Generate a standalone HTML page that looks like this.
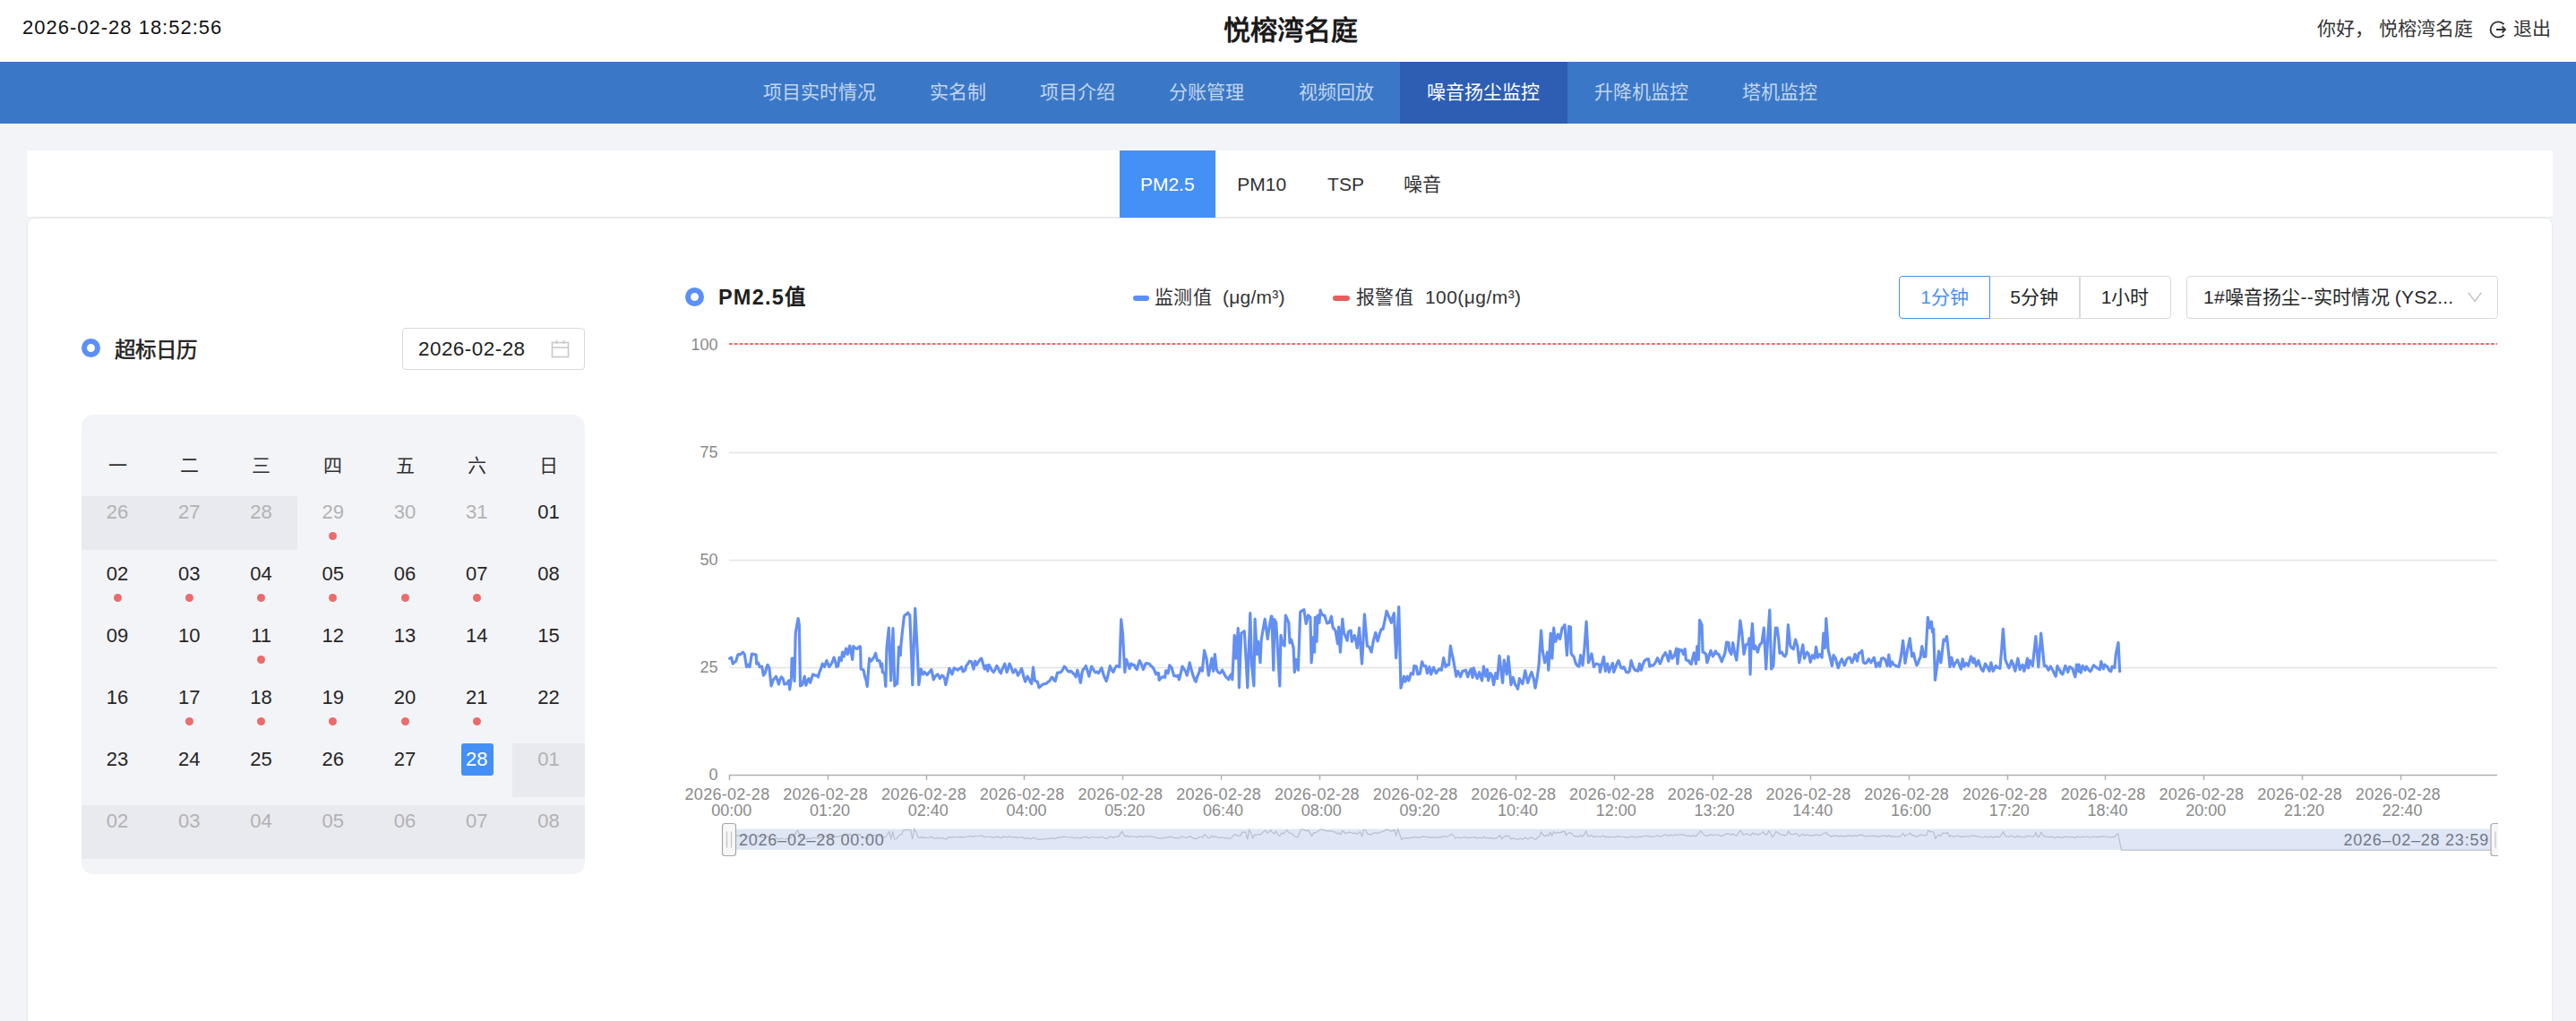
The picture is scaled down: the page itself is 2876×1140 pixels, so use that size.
<!DOCTYPE html>
<html lang="zh-CN"><head><meta charset="utf-8">
<style>
*{margin:0;padding:0;box-sizing:border-box}
html,body{width:2876px;height:1140px;overflow:hidden}
body{position:relative;background:#f3f4f8;font-family:"Liberation Sans",sans-serif;color:#303133}
.a{position:absolute;white-space:nowrap}
#hdr{left:0;top:0;width:2876px;height:69px;background:#fff}
#nav{left:0;top:69px;width:2876px;height:69px;background:#3a78c7}
.ni{position:absolute;top:0;height:69px;line-height:67px;font-size:21px;color:rgba(255,255,255,.7);text-align:center}
.ni.on{background:#2d5eb3;color:#fff}
#c1{left:30px;top:168px;width:2820px;height:75px;background:#fff;border-bottom:1px solid #e9eaed}
.tab{position:absolute;top:168px;height:75px;line-height:75px;font-size:21px;color:#303133;text-align:center}
.tab.on{background:#4490f6;color:#fff}
#c2{left:30px;top:243px;width:2820px;height:940px;background:#fff;border:1px solid #e8e9ec;border-radius:8px}
.ring{position:absolute;width:21px;height:21px;border-radius:50%;border:6px solid #5b8ff9;background:#fff}
.ttl{font-size:23.5px;font-weight:bold;color:#1f1f1f}
#dinp{left:449px;top:366px;width:204px;height:47px;border:1px solid #d9d9d9;border-radius:4px;background:#fff}
#cal{left:91px;top:463px;width:562px;height:513px;background:#f3f4f8;border-radius:13px;overflow:hidden}
.wd{position:absolute;top:503px;width:80px;text-align:center;font-size:21px;color:#303133}
.cell{position:absolute;width:80.23px;height:60px}
.cell.g{background:#e9eaef}
.num{position:absolute;left:0;right:0;top:0.5px;height:36px;line-height:36px;text-align:center;font-size:22px;color:#262626}
.cell.o .num{color:#b2b2b2}
.dot{position:absolute;left:50%;top:40.5px;width:9px;height:9px;margin-left:-4.5px;border-radius:50%;background:#ec6b6b}
.sel{position:absolute;left:22.5px;top:0;width:36px;height:36px;border-radius:3px;background:#4490f6}
.sel+.num{color:#fff}
.btn{position:absolute;top:308px;height:48px;line-height:46px;text-align:center;font-size:21px;color:#262626;border:1px solid #d9d9d9;background:#fff}
.lab{font-size:18px;color:#8a8a8a}
</style></head><body>
<div id="hdr" class="a"></div>
<div class="a" style="left:25px;top:17px;font-size:22px;line-height:28px;letter-spacing:1px;color:#111">2026-02-28 18:52:56</div>
<div class="a" style="left:1366px;top:17px;font-size:30px;line-height:34px;font-weight:bold;color:#1a1a1a">悦榕湾名庭</div>
<div class="a" style="left:2587px;top:20px;font-size:21px;line-height:24px;color:#333">你好，&nbsp;悦榕湾名庭</div>
<svg class="a" style="left:2778px;top:22px" width="22" height="22" viewBox="0 0 22 22"><path d="M17.5 5.2A8.6 8.6 0 1 0 17.5 16.8" fill="none" stroke="#333" stroke-width="1.8"/><path d="M9 11H19M15.5 7.5L19 11L15.5 14.5" fill="none" stroke="#333" stroke-width="1.8"/></svg>
<div class="a" style="left:2806px;top:20px;font-size:21px;line-height:24px;color:#333">退出</div>

<div id="nav" class="a">
<div class="ni" style="left:822.5px;width:185px">项目实时情况</div>
<div class="ni" style="left:1007.7px;width:123.3px">实名制</div>
<div class="ni" style="left:1131px;width:144px">项目介绍</div>
<div class="ni" style="left:1275px;width:144.5px">分账管理</div>
<div class="ni" style="left:1419.5px;width:144px">视频回放</div>
<div class="ni on" style="left:1563px;width:186.5px">噪音扬尘监控</div>
<div class="ni" style="left:1749.5px;width:165px">升降机监控</div>
<div class="ni" style="left:1914.5px;width:144px">塔机监控</div>
</div>

<div id="c1" class="a"></div>
<div class="tab on" style="left:1249.5px;width:107.5px">PM2.5</div>
<div class="tab" style="left:1357px;width:103.5px">PM10</div>
<div class="tab" style="left:1460.5px;width:84px">TSP</div>
<div class="tab" style="left:1544.5px;width:86.5px">噪音</div>

<div id="c2" class="a"></div>

<!-- calendar -->
<div class="ring" style="left:91px;top:378px"></div>
<div class="a ttl" style="left:128px;top:377px;line-height:28px;font-weight:normal;-webkit-text-stroke:.55px #222;color:#222">超标日历</div>
<div id="dinp" class="a"></div>
<div class="a" style="left:467px;top:376px;font-size:22.4px;line-height:28px;letter-spacing:.5px;color:#222">2026-02-28</div>
<svg class="a" style="left:615px;top:379px" width="21" height="21" viewBox="0 0 21 21"><rect x="1.5" y="3.5" width="18" height="16" fill="none" stroke="#c8c8c8" stroke-width="1.6"/><path d="M1.5 9H19.5M6.5 1V5M14.5 1V5" stroke="#c8c8c8" stroke-width="1.6"/></svg>
<div id="cal" class="a"></div>
<div id="calg">
<div class="wd" style="left:91.00px;width:80.23px">一</div>
<div class="wd" style="left:171.23px;width:80.23px">二</div>
<div class="wd" style="left:251.46px;width:80.23px">三</div>
<div class="wd" style="left:331.69px;width:80.23px">四</div>
<div class="wd" style="left:411.92px;width:80.23px">五</div>
<div class="wd" style="left:492.15px;width:80.23px">六</div>
<div class="wd" style="left:572.38px;width:80.23px">日</div>
<div class="cell o g" style="left:91.00px;top:553.8px"><div class="num">26</div></div>
<div class="cell o g" style="left:171.23px;top:553.8px"><div class="num">27</div></div>
<div class="cell o g" style="left:251.46px;top:553.8px"><div class="num">28</div></div>
<div class="cell o" style="left:331.69px;top:553.8px"><div class="num">29</div><div class="dot"></div></div>
<div class="cell o" style="left:411.92px;top:553.8px"><div class="num">30</div></div>
<div class="cell o" style="left:492.15px;top:553.8px"><div class="num">31</div></div>
<div class="cell" style="left:572.38px;top:553.8px"><div class="num">01</div></div>
<div class="cell" style="left:91.00px;top:622.8px"><div class="num">02</div><div class="dot"></div></div>
<div class="cell" style="left:171.23px;top:622.8px"><div class="num">03</div><div class="dot"></div></div>
<div class="cell" style="left:251.46px;top:622.8px"><div class="num">04</div><div class="dot"></div></div>
<div class="cell" style="left:331.69px;top:622.8px"><div class="num">05</div><div class="dot"></div></div>
<div class="cell" style="left:411.92px;top:622.8px"><div class="num">06</div><div class="dot"></div></div>
<div class="cell" style="left:492.15px;top:622.8px"><div class="num">07</div><div class="dot"></div></div>
<div class="cell" style="left:572.38px;top:622.8px"><div class="num">08</div></div>
<div class="cell" style="left:91.00px;top:691.8px"><div class="num">09</div></div>
<div class="cell" style="left:171.23px;top:691.8px"><div class="num">10</div></div>
<div class="cell" style="left:251.46px;top:691.8px"><div class="num">11</div><div class="dot"></div></div>
<div class="cell" style="left:331.69px;top:691.8px"><div class="num">12</div></div>
<div class="cell" style="left:411.92px;top:691.8px"><div class="num">13</div></div>
<div class="cell" style="left:492.15px;top:691.8px"><div class="num">14</div></div>
<div class="cell" style="left:572.38px;top:691.8px"><div class="num">15</div></div>
<div class="cell" style="left:91.00px;top:760.8px"><div class="num">16</div></div>
<div class="cell" style="left:171.23px;top:760.8px"><div class="num">17</div><div class="dot"></div></div>
<div class="cell" style="left:251.46px;top:760.8px"><div class="num">18</div><div class="dot"></div></div>
<div class="cell" style="left:331.69px;top:760.8px"><div class="num">19</div><div class="dot"></div></div>
<div class="cell" style="left:411.92px;top:760.8px"><div class="num">20</div><div class="dot"></div></div>
<div class="cell" style="left:492.15px;top:760.8px"><div class="num">21</div><div class="dot"></div></div>
<div class="cell" style="left:572.38px;top:760.8px"><div class="num">22</div></div>
<div class="cell" style="left:91.00px;top:829.8px"><div class="num">23</div></div>
<div class="cell" style="left:171.23px;top:829.8px"><div class="num">24</div></div>
<div class="cell" style="left:251.46px;top:829.8px"><div class="num">25</div></div>
<div class="cell" style="left:331.69px;top:829.8px"><div class="num">26</div></div>
<div class="cell" style="left:411.92px;top:829.8px"><div class="num">27</div></div>
<div class="cell" style="left:492.15px;top:829.8px"><div class="sel"></div><div class="num">28</div></div>
<div class="cell o g" style="left:572.38px;top:829.8px"><div class="num">01</div></div>
<div class="cell o g" style="left:91.00px;top:898.8px"><div class="num">02</div></div>
<div class="cell o g" style="left:171.23px;top:898.8px"><div class="num">03</div></div>
<div class="cell o g" style="left:251.46px;top:898.8px"><div class="num">04</div></div>
<div class="cell o g" style="left:331.69px;top:898.8px"><div class="num">05</div></div>
<div class="cell o g" style="left:411.92px;top:898.8px"><div class="num">06</div></div>
<div class="cell o g" style="left:492.15px;top:898.8px"><div class="num">07</div></div>
<div class="cell o g" style="left:572.38px;top:898.8px"><div class="num">08</div></div>
</div><!--/calg-->

<!-- chart header -->
<div class="ring" style="left:765px;top:321px"></div>
<div class="a ttl" style="left:802px;top:318px;line-height:28px;letter-spacing:1.2px">PM2.5值</div>
<div class="a" style="left:1265px;top:330px;width:18px;height:6px;border-radius:3px;background:#5b8ff9"></div>
<div class="a" style="left:1289px;top:318px;font-size:21px;line-height:28px;letter-spacing:.25px;color:#333">监测值&nbsp;&nbsp;(μg/m³)</div>
<div class="a" style="left:1488px;top:330px;width:19px;height:6px;border-radius:3px;background:#e85d5d"></div>
<div class="a" style="left:1514px;top:318px;font-size:21px;line-height:28px;letter-spacing:.45px;color:#333">报警值&nbsp;&nbsp;100(μg/m³)</div>

<div class="btn" style="left:2120px;width:102px;border-color:#4a8ff4;color:#4a8ff4;z-index:2;border-radius:4px 0 0 4px">1分钟</div>
<div class="btn" style="left:2221px;width:101px;border-left:none">5分钟</div>
<div class="btn" style="left:2321.5px;width:102px;border-radius:0 4px 4px 0">1小时</div>
<div class="btn" style="left:2441px;width:348px;text-align:left;padding-left:18px;letter-spacing:.2px;border-radius:4px">1#噪音扬尘--实时情况 (YS2...</div>
<svg class="a" style="left:2754px;top:325px" width="18" height="14" viewBox="0 0 18 14"><path d="M1.7 1.7L9.1 11.5L16.2 1.9" fill="none" stroke="#bdbdbd" stroke-width="1.3"/></svg>

<div id="chart">
<svg class="a" style="left:0;top:0" width="2876" height="1140" viewBox="0 0 2876 1140">
<line x1="814" y1="745.5" x2="2788" y2="745.5" stroke="#e3e3e3" stroke-width="1.5"/>
<line x1="814" y1="625.5" x2="2788" y2="625.5" stroke="#e3e3e3" stroke-width="1.5"/>
<line x1="814" y1="505.5" x2="2788" y2="505.5" stroke="#e3e3e3" stroke-width="1.5"/>
<line x1="814" y1="384" x2="2788" y2="384" stroke="#dedede" stroke-width="1.5"/>
<line x1="814" y1="384" x2="2788" y2="384" stroke="#ef6767" stroke-width="1.8" stroke-dasharray="3.5 2.32" stroke-linecap="butt"/>
<line x1="814" y1="865.5" x2="2788" y2="865.5" stroke="#b0b0b0" stroke-width="1.5"/>
<text x="801.5" y="871.3" text-anchor="end" font-size="18" fill="#8a8a8a">0</text>
<text x="801.5" y="751.1" text-anchor="end" font-size="18" fill="#8a8a8a">25</text>
<text x="801.5" y="631.0" text-anchor="end" font-size="18" fill="#8a8a8a">50</text>
<text x="801.5" y="510.9" text-anchor="end" font-size="18" fill="#8a8a8a">75</text>
<text x="801.5" y="390.7" text-anchor="end" font-size="18" fill="#8a8a8a">100</text>
<line x1="814.5" y1="865" x2="814.5" y2="871" stroke="#b0b0b0" stroke-width="1.5"/>
<text x="812.0" y="893.2" text-anchor="middle" font-size="18" letter-spacing="0.28" fill="#8a8a8a">2026-02-28</text>
<text x="816.8" y="910.5" text-anchor="middle" font-size="18" fill="#8a8a8a">00:00</text>
<line x1="924.5" y1="865" x2="924.5" y2="871" stroke="#b0b0b0" stroke-width="1.5"/>
<text x="921.7" y="893.2" text-anchor="middle" font-size="18" letter-spacing="0.28" fill="#8a8a8a">2026-02-28</text>
<text x="926.5" y="910.5" text-anchor="middle" font-size="18" fill="#8a8a8a">01:20</text>
<line x1="1034.5" y1="865" x2="1034.5" y2="871" stroke="#b0b0b0" stroke-width="1.5"/>
<text x="1031.5" y="893.2" text-anchor="middle" font-size="18" letter-spacing="0.28" fill="#8a8a8a">2026-02-28</text>
<text x="1036.3" y="910.5" text-anchor="middle" font-size="18" fill="#8a8a8a">02:40</text>
<line x1="1143.5" y1="865" x2="1143.5" y2="871" stroke="#b0b0b0" stroke-width="1.5"/>
<text x="1141.2" y="893.2" text-anchor="middle" font-size="18" letter-spacing="0.28" fill="#8a8a8a">2026-02-28</text>
<text x="1146.0" y="910.5" text-anchor="middle" font-size="18" fill="#8a8a8a">04:00</text>
<line x1="1253.5" y1="865" x2="1253.5" y2="871" stroke="#b0b0b0" stroke-width="1.5"/>
<text x="1250.9" y="893.2" text-anchor="middle" font-size="18" letter-spacing="0.28" fill="#8a8a8a">2026-02-28</text>
<text x="1255.7" y="910.5" text-anchor="middle" font-size="18" fill="#8a8a8a">05:20</text>
<line x1="1363.5" y1="865" x2="1363.5" y2="871" stroke="#b0b0b0" stroke-width="1.5"/>
<text x="1360.6" y="893.2" text-anchor="middle" font-size="18" letter-spacing="0.28" fill="#8a8a8a">2026-02-28</text>
<text x="1365.4" y="910.5" text-anchor="middle" font-size="18" fill="#8a8a8a">06:40</text>
<line x1="1473.5" y1="865" x2="1473.5" y2="871" stroke="#b0b0b0" stroke-width="1.5"/>
<text x="1470.4" y="893.2" text-anchor="middle" font-size="18" letter-spacing="0.28" fill="#8a8a8a">2026-02-28</text>
<text x="1475.2" y="910.5" text-anchor="middle" font-size="18" fill="#8a8a8a">08:00</text>
<line x1="1582.5" y1="865" x2="1582.5" y2="871" stroke="#b0b0b0" stroke-width="1.5"/>
<text x="1580.1" y="893.2" text-anchor="middle" font-size="18" letter-spacing="0.28" fill="#8a8a8a">2026-02-28</text>
<text x="1584.9" y="910.5" text-anchor="middle" font-size="18" fill="#8a8a8a">09:20</text>
<line x1="1692.5" y1="865" x2="1692.5" y2="871" stroke="#b0b0b0" stroke-width="1.5"/>
<text x="1689.8" y="893.2" text-anchor="middle" font-size="18" letter-spacing="0.28" fill="#8a8a8a">2026-02-28</text>
<text x="1694.6" y="910.5" text-anchor="middle" font-size="18" fill="#8a8a8a">10:40</text>
<line x1="1802.5" y1="865" x2="1802.5" y2="871" stroke="#b0b0b0" stroke-width="1.5"/>
<text x="1799.5" y="893.2" text-anchor="middle" font-size="18" letter-spacing="0.28" fill="#8a8a8a">2026-02-28</text>
<text x="1804.3" y="910.5" text-anchor="middle" font-size="18" fill="#8a8a8a">12:00</text>
<line x1="1912.5" y1="865" x2="1912.5" y2="871" stroke="#b0b0b0" stroke-width="1.5"/>
<text x="1909.3" y="893.2" text-anchor="middle" font-size="18" letter-spacing="0.28" fill="#8a8a8a">2026-02-28</text>
<text x="1914.1" y="910.5" text-anchor="middle" font-size="18" fill="#8a8a8a">13:20</text>
<line x1="2021.5" y1="865" x2="2021.5" y2="871" stroke="#b0b0b0" stroke-width="1.5"/>
<text x="2019.0" y="893.2" text-anchor="middle" font-size="18" letter-spacing="0.28" fill="#8a8a8a">2026-02-28</text>
<text x="2023.8" y="910.5" text-anchor="middle" font-size="18" fill="#8a8a8a">14:40</text>
<line x1="2131.5" y1="865" x2="2131.5" y2="871" stroke="#b0b0b0" stroke-width="1.5"/>
<text x="2128.7" y="893.2" text-anchor="middle" font-size="18" letter-spacing="0.28" fill="#8a8a8a">2026-02-28</text>
<text x="2133.5" y="910.5" text-anchor="middle" font-size="18" fill="#8a8a8a">16:00</text>
<line x1="2241.5" y1="865" x2="2241.5" y2="871" stroke="#b0b0b0" stroke-width="1.5"/>
<text x="2238.4" y="893.2" text-anchor="middle" font-size="18" letter-spacing="0.28" fill="#8a8a8a">2026-02-28</text>
<text x="2243.2" y="910.5" text-anchor="middle" font-size="18" fill="#8a8a8a">17:20</text>
<line x1="2350.5" y1="865" x2="2350.5" y2="871" stroke="#b0b0b0" stroke-width="1.5"/>
<text x="2348.2" y="893.2" text-anchor="middle" font-size="18" letter-spacing="0.28" fill="#8a8a8a">2026-02-28</text>
<text x="2353.0" y="910.5" text-anchor="middle" font-size="18" fill="#8a8a8a">18:40</text>
<line x1="2460.5" y1="865" x2="2460.5" y2="871" stroke="#b0b0b0" stroke-width="1.5"/>
<text x="2457.9" y="893.2" text-anchor="middle" font-size="18" letter-spacing="0.28" fill="#8a8a8a">2026-02-28</text>
<text x="2462.7" y="910.5" text-anchor="middle" font-size="18" fill="#8a8a8a">20:00</text>
<line x1="2570.5" y1="865" x2="2570.5" y2="871" stroke="#b0b0b0" stroke-width="1.5"/>
<text x="2567.6" y="893.2" text-anchor="middle" font-size="18" letter-spacing="0.28" fill="#8a8a8a">2026-02-28</text>
<text x="2572.4" y="910.5" text-anchor="middle" font-size="18" fill="#8a8a8a">21:20</text>
<line x1="2680.5" y1="865" x2="2680.5" y2="871" stroke="#b0b0b0" stroke-width="1.5"/>
<text x="2677.3" y="893.2" text-anchor="middle" font-size="18" letter-spacing="0.28" fill="#8a8a8a">2026-02-28</text>
<text x="2682.1" y="910.5" text-anchor="middle" font-size="18" fill="#8a8a8a">22:40</text>
<polyline points="814.7,735.2 816.5,734.1 818.2,741.1 820.0,739.3 821.8,738.2 823.5,731.7 824.9,730.4 826.3,730.9 827.6,730.0 829.4,728.2 831.2,730.5 833.5,744.6 835.3,742.3 837.0,744.6 839.4,730.0 841.7,730.5 844.1,731.1 844.7,741.1 846.4,739.9 848.2,744.6 850.6,744.1 852.3,754.1 854.1,751.7 855.6,746.1 857.0,742.3 858.8,745.8 861.1,765.8 863.5,758.8 865.0,757.1 866.4,755.2 867.9,759.3 869.4,764.0 870.8,759.0 872.3,755.8 874.1,757.6 875.8,764.0 878.2,763.5 880.5,759.9 881.7,769.9 883.5,756.4 884.1,735.2 885.8,735.2 887.0,760.5 888.2,707.0 889.6,698.8 891.1,690.6 892.3,697.6 893.5,765.8 895.8,764.6 898.2,755.2 899.9,765.2 901.4,760.4 902.9,757.6 904.6,762.3 906.1,757.4 907.6,752.9 909.9,754.1 911.7,754.0 913.5,755.8 914.9,750.5 916.4,747.0 918.2,741.1 920.5,744.6 922.9,737.6 924.3,741.0 925.8,744.6 928.2,741.1 929.6,738.3 931.1,734.1 932.6,738.5 934.0,744.6 935.8,743.5 937.0,734.1 939.3,737.6 940.5,728.2 942.3,732.9 944.6,724.1 946.4,730.5 948.7,721.1 950.2,728.2 951.7,736.4 952.8,721.7 954.3,723.2 955.8,724.1 957.2,724.3 958.5,722.7 959.9,721.7 960.6,722.3 961.2,747.0 962.6,747.4 964.1,748.2 965.5,755.3 966.9,759.3 968.2,766.4 970.6,735.2 972.3,738.2 974.7,735.2 976.2,733.1 977.6,729.4 979.4,737.6 980.9,737.4 982.3,738.2 983.5,744.6 984.7,741.1 985.3,750.5 987.6,751.7 988.8,766.4 990.0,723.5 992.3,701.1 994.7,759.9 997.0,701.7 998.8,765.8 1000.3,763.8 1001.7,763.5 1003.5,722.3 1005.3,731.7 1005.8,721.1 1007.6,703.8 1009.4,688.2 1010.7,686.4 1012.1,686.2 1013.5,684.1 1015.8,687.0 1017.3,725.1 1018.8,764.6 1020.3,722.2 1021.7,679.4 1024.1,725.8 1025.8,764.6 1028.2,747.0 1030.5,752.9 1032.3,750.5 1033.8,752.3 1035.2,753.5 1036.8,751.2 1038.4,749.6 1039.9,747.6 1042.3,758.8 1043.9,755.8 1045.4,753.9 1047.0,752.9 1049.3,757.6 1051.7,754.1 1053.2,755.2 1054.6,757.6 1055.8,764.6 1057.2,759.0 1058.6,752.3 1059.9,746.4 1061.4,749.2 1062.9,752.9 1065.2,745.8 1066.6,746.8 1068.0,747.3 1069.3,748.2 1070.7,746.6 1072.1,746.5 1073.4,744.6 1075.2,749.9 1077.6,748.2 1078.7,743.5 1080.5,741.3 1082.3,738.2 1084.6,738.8 1087.0,747.0 1088.7,738.2 1090.5,742.3 1092.8,738.2 1094.3,736.1 1095.8,735.2 1097.5,741.3 1099.3,747.0 1101.1,742.9 1102.8,749.3 1104.0,742.3 1105.8,745.1 1107.5,748.6 1109.3,750.5 1111.1,747.5 1112.8,743.5 1114.4,745.7 1116.0,750.0 1117.5,751.7 1118.9,747.3 1120.3,744.5 1121.8,741.1 1124.1,750.5 1125.6,746.4 1127.0,741.1 1128.4,743.7 1129.8,747.8 1131.2,751.1 1133.5,747.6 1135.0,749.8 1136.5,754.1 1137.8,751.9 1139.2,749.5 1140.6,746.4 1141.9,751.5 1143.3,757.0 1144.7,761.1 1147.0,755.2 1148.6,757.6 1150.2,761.1 1151.7,763.5 1153.5,745.2 1155.3,759.9 1156.7,760.7 1158.2,761.1 1160.0,767.6 1161.7,766.4 1163.5,764.7 1165.3,763.5 1166.7,763.6 1168.2,763.3 1169.7,761.6 1171.1,761.1 1172.6,759.1 1174.1,756.4 1175.4,756.8 1176.8,759.6 1178.2,760.5 1180.5,751.1 1182.3,751.1 1184.1,750.5 1185.4,749.5 1186.8,746.9 1188.2,744.1 1189.6,745.3 1190.9,747.3 1192.3,749.3 1193.9,750.1 1195.4,749.1 1197.0,750.5 1198.4,752.2 1199.7,753.3 1201.1,755.8 1202.9,748.2 1204.6,754.4 1206.4,762.3 1208.2,750.5 1209.5,747.2 1210.9,746.4 1212.3,743.5 1214.0,748.5 1215.8,755.2 1217.3,749.1 1218.7,744.1 1220.2,746.5 1221.7,749.3 1223.3,750.9 1224.8,750.0 1226.4,751.7 1228.2,748.6 1229.9,745.8 1232.3,754.1 1233.7,757.4 1235.2,760.5 1236.6,755.7 1237.9,749.9 1239.3,743.5 1241.1,747.8 1242.8,750.5 1244.6,746.5 1246.4,743.5 1248.1,743.9 1249.9,744.6 1251.7,691.7 1253.4,707.0 1255.8,750.5 1257.5,736.4 1259.3,741.1 1261.1,746.4 1262.8,741.1 1264.6,742.6 1266.4,742.3 1267.9,745.9 1269.4,747.6 1270.9,741.8 1272.3,737.6 1273.7,740.2 1275.1,743.7 1276.5,747.6 1277.9,743.5 1279.4,740.5 1281.2,740.8 1282.9,741.1 1284.7,743.3 1286.5,744.5 1288.2,747.0 1290.6,752.9 1292.0,751.2 1293.5,751.7 1294.1,759.3 1295.9,757.4 1297.6,755.8 1299.1,755.8 1300.6,756.4 1301.7,748.8 1304.1,751.7 1305.8,742.9 1308.2,745.8 1310.6,754.6 1312.1,754.6 1313.7,755.2 1315.3,754.1 1316.4,758.8 1318.2,751.8 1320.0,744.1 1321.7,746.7 1323.5,749.3 1325.2,754.1 1326.7,747.3 1328.2,739.9 1330.5,749.3 1332.3,755.0 1334.1,759.9 1335.2,761.1 1336.8,755.0 1338.4,751.8 1339.9,745.8 1342.3,749.3 1344.6,726.4 1347.0,735.2 1349.3,754.1 1351.1,745.3 1352.9,735.2 1354.6,749.3 1356.4,730.5 1358.2,747.6 1359.9,750.5 1361.7,751.7 1363.2,750.6 1364.6,748.2 1366.4,751.5 1368.2,755.2 1369.9,756.8 1371.7,758.8 1373.2,754.9 1374.6,752.9 1375.8,758.8 1378.2,709.4 1379.9,735.2 1382.3,701.7 1383.4,767.6 1385.8,707.0 1387.6,706.1 1389.3,704.7 1391.1,735.2 1392.8,767.6 1394.3,725.2 1395.8,684.7 1397.5,742.3 1399.9,765.8 1401.1,691.2 1403.4,730.5 1404.6,716.4 1407.0,739.9 1408.1,715.3 1409.5,706.6 1410.9,698.4 1412.2,691.2 1413.7,702.0 1415.2,713.5 1416.6,704.1 1417.9,695.5 1419.3,688.2 1420.0,688.2 1421.8,748.2 1422.9,691.7 1424.7,695.3 1426.1,718.0 1427.4,741.4 1428.8,765.8 1430.0,709.4 1431.7,718.8 1434.1,721.1 1435.3,687.0 1437.0,690.9 1438.8,695.3 1440.0,717.6 1441.7,714.1 1444.1,723.5 1445.3,750.5 1447.0,736.4 1449.4,748.2 1451.7,683.5 1453.2,681.9 1454.7,682.3 1455.8,680.6 1458.2,696.4 1460.6,687.0 1462.9,689.4 1464.1,739.9 1466.4,711.7 1467.6,728.2 1468.2,689.4 1470.0,716.4 1471.1,687.0 1472.9,695.3 1474.1,681.2 1475.5,684.9 1477.0,687.0 1478.8,687.0 1480.2,691.7 1481.7,695.9 1484.1,695.3 1486.4,688.2 1488.2,701.1 1489.6,702.1 1491.1,704.7 1493.5,718.8 1494.6,700.0 1496.4,728.2 1498.8,691.2 1500.5,707.0 1502.3,710.6 1504.1,715.3 1505.2,705.8 1506.7,704.6 1508.2,704.1 1509.3,716.4 1510.8,712.6 1512.3,709.4 1513.8,715.6 1515.2,723.5 1517.6,701.1 1519.0,721.9 1520.5,741.1 1522.0,714.6 1523.4,685.9 1524.9,703.4 1526.4,721.1 1528.7,722.3 1531.1,728.2 1533.4,715.3 1535.8,706.4 1538.1,715.8 1540.5,707.0 1542.3,702.3 1544.0,702.3 1545.8,694.1 1548.1,682.3 1549.6,685.8 1551.1,689.4 1553.4,695.3 1554.9,689.1 1556.4,684.7 1558.7,734.7 1560.2,705.3 1561.7,677.6 1564.0,768.2 1565.8,761.3 1567.5,755.2 1568.8,761.1 1571.2,755.2 1572.9,759.9 1575.3,751.7 1577.6,752.9 1578.8,743.5 1581.2,744.1 1582.9,752.9 1585.3,752.3 1587.6,738.8 1589.4,743.5 1591.7,743.5 1593.5,751.7 1595.9,744.6 1597.6,752.9 1599.1,748.5 1600.6,745.2 1602.0,749.2 1603.5,751.7 1605.3,748.6 1607.0,747.0 1609.4,748.2 1611.7,734.7 1614.1,744.6 1615.8,742.4 1617.6,742.3 1619.4,721.1 1620.8,729.2 1622.3,735.2 1624.1,745.3 1625.8,755.2 1627.6,749.3 1629.1,751.8 1630.5,755.8 1632.9,749.3 1634.7,748.9 1636.4,748.2 1638.8,755.8 1640.5,750.4 1642.3,747.0 1644.1,756.4 1645.2,745.8 1646.6,749.8 1648.0,754.7 1649.3,757.6 1651.7,750.5 1653.2,756.0 1654.6,759.9 1656.4,744.1 1658.8,755.2 1660.5,747.6 1661.7,759.9 1664.0,751.7 1665.8,754.1 1667.6,764.6 1669.9,751.7 1671.7,757.6 1674.0,732.3 1675.8,747.7 1677.6,762.3 1679.3,737.0 1680.8,744.4 1682.3,752.9 1684.0,732.9 1685.5,748.5 1687.0,764.6 1689.3,756.4 1691.7,764.6 1693.1,766.3 1694.6,769.3 1696.4,757.6 1698.1,761.1 1699.9,763.5 1701.4,756.2 1702.8,748.8 1704.3,756.1 1705.8,762.3 1707.2,758.0 1708.5,753.8 1709.9,750.5 1712.2,757.6 1714.0,768.2 1716.4,755.2 1718.1,742.3 1720.6,704.1 1722.3,727.0 1724.7,739.9 1726.2,734.8 1727.6,728.2 1728.8,748.2 1731.2,707.0 1732.9,735.2 1734.7,701.1 1736.5,716.4 1737.9,713.4 1739.4,708.2 1741.7,713.5 1744.1,701.1 1745.6,700.2 1747.0,697.6 1749.4,731.7 1751.7,699.4 1753.5,700.0 1754.1,729.4 1755.6,731.8 1757.0,732.9 1759.4,741.1 1761.1,743.3 1762.9,744.1 1764.7,731.7 1767.0,742.9 1768.8,725.8 1771.1,694.1 1773.5,739.9 1775.2,735.5 1777.0,730.0 1779.4,744.6 1780.8,742.3 1782.3,741.1 1784.1,741.7 1785.8,742.3 1786.4,750.5 1787.8,744.5 1789.2,738.1 1790.5,733.5 1792.3,749.3 1794.6,741.1 1796.4,750.5 1797.8,746.2 1799.2,743.4 1800.5,740.5 1801.7,750.5 1804.1,744.1 1805.5,740.3 1807.0,737.6 1808.5,742.1 1809.9,745.8 1811.4,746.2 1812.9,744.6 1814.3,747.5 1815.8,750.5 1817.6,750.9 1819.3,749.3 1821.1,737.6 1822.9,743.4 1824.6,747.0 1826.0,748.8 1827.4,748.3 1828.7,749.3 1830.5,741.1 1832.3,748.2 1834.0,742.6 1835.8,738.2 1837.4,736.8 1838.9,735.9 1840.5,735.8 1841.7,744.1 1843.2,742.8 1844.8,743.2 1846.4,742.3 1847.7,740.6 1849.1,737.9 1850.5,734.7 1852.0,737.8 1853.4,741.1 1854.9,737.3 1856.4,732.9 1857.8,731.5 1859.3,728.8 1861.1,732.6 1862.8,738.2 1864.6,727.0 1866.9,735.2 1868.8,732.9 1870.3,728.8 1871.8,724.1 1872.9,741.1 1874.7,725.2 1876.2,726.4 1877.6,725.8 1879.4,730.5 1881.2,724.7 1882.3,736.4 1883.8,737.6 1885.3,737.6 1886.7,740.2 1888.2,741.7 1889.7,735.2 1891.2,728.8 1893.5,741.1 1894.7,721.7 1896.4,736.4 1897.6,692.3 1900.0,697.6 1901.1,728.2 1902.9,728.7 1904.7,730.5 1905.8,739.9 1907.2,736.1 1908.6,730.6 1910.0,726.4 1912.3,732.9 1913.8,730.6 1915.3,727.0 1917.0,729.8 1918.8,730.5 1920.5,734.4 1922.3,738.8 1924.1,733.8 1925.8,729.4 1927.6,717.0 1930.0,717.6 1930.5,725.8 1932.9,730.5 1934.7,717.6 1937.0,730.5 1938.8,737.0 1941.1,714.1 1942.9,692.9 1944.6,704.7 1947.0,730.5 1949.3,720.0 1951.7,718.8 1952.9,712.9 1954.1,752.9 1955.2,712.9 1956.4,696.4 1958.2,724.7 1959.9,721.1 1962.3,728.2 1964.6,720.0 1967.0,717.6 1969.3,701.1 1971.7,747.0 1974.0,707.0 1975.8,681.2 1977.6,747.0 1979.9,743.5 1981.1,718.8 1982.3,701.1 1984.0,701.1 1985.8,714.1 1987.0,729.4 1989.3,728.2 1991.1,731.5 1992.8,732.9 1994.6,729.4 1996.4,697.6 1998.7,721.1 2000.5,723.4 2002.3,724.7 2004.6,714.1 2007.0,722.3 2008.7,739.9 2010.1,732.6 2011.5,725.8 2012.8,720.0 2014.6,735.2 2016.1,730.9 2017.5,728.2 2019.4,730.5 2021.2,739.4 2023.5,731.7 2025.9,735.2 2027.6,722.3 2029.4,734.1 2031.7,730.5 2034.1,734.1 2035.9,707.0 2037.6,723.5 2038.8,690.6 2041.2,725.8 2042.9,732.9 2045.3,743.5 2047.0,731.7 2049.4,735.2 2050.9,741.4 2052.3,745.8 2054.1,739.9 2056.4,735.8 2057.9,740.0 2059.4,742.9 2061.7,736.4 2063.5,734.5 2065.3,734.1 2067.6,739.9 2069.4,736.0 2071.1,730.5 2073.5,738.2 2075.2,729.4 2077.0,728.9 2078.8,726.4 2080.5,739.9 2082.0,740.6 2083.5,740.5 2084.9,737.9 2086.4,735.8 2088.8,739.9 2090.5,737.1 2092.3,734.1 2094.6,744.6 2097.0,739.9 2098.8,744.1 2100.5,735.2 2102.3,734.7 2104.1,735.8 2105.5,738.6 2107.0,743.5 2108.8,731.1 2110.5,744.1 2112.3,738.8 2114.0,741.9 2115.8,742.9 2117.2,743.8 2118.6,744.1 2119.9,744.6 2121.7,736.4 2123.2,726.8 2124.6,715.3 2127.0,740.5 2129.3,727.0 2130.8,719.8 2132.3,712.9 2134.6,732.9 2136.4,729.4 2138.1,736.9 2139.9,742.9 2141.3,740.7 2142.7,736.4 2144.0,734.1 2145.8,721.7 2148.1,733.5 2149.9,732.9 2152.3,689.4 2154.6,701.1 2156.4,694.1 2157.5,705.8 2158.7,702.3 2160.5,759.3 2162.8,742.3 2164.6,727.0 2166.9,739.9 2168.5,726.5 2170.0,714.1 2171.8,715.3 2173.5,710.6 2175.3,727.1 2177.0,744.6 2178.8,734.1 2181.2,744.1 2182.5,741.1 2183.9,739.5 2185.3,737.0 2186.6,739.8 2188.0,743.5 2189.4,747.0 2191.2,735.8 2192.9,744.1 2195.3,740.5 2197.6,743.5 2199.1,737.4 2200.6,732.9 2202.9,739.9 2204.1,735.2 2206.4,743.5 2208.8,737.6 2211.1,744.6 2212.6,747.9 2214.1,749.3 2216.4,741.1 2218.0,743.5 2219.6,746.5 2221.1,749.3 2222.9,739.9 2225.2,749.3 2226.7,746.6 2228.2,743.5 2229.8,745.3 2231.3,745.3 2232.9,746.4 2234.7,725.3 2236.4,702.3 2238.8,736.4 2240.1,739.6 2241.5,742.8 2242.9,745.8 2244.4,741.8 2245.8,737.6 2247.2,740.5 2248.6,745.3 2249.9,749.3 2251.4,741.6 2252.9,735.2 2255.2,747.6 2256.7,743.8 2258.2,742.3 2259.9,749.3 2261.7,743.0 2263.5,735.2 2264.6,745.8 2266.4,737.6 2267.9,739.8 2269.3,743.5 2271.1,727.0 2272.9,710.6 2274.3,728.1 2275.8,744.6 2277.3,726.0 2278.7,707.0 2280.5,724.9 2282.3,743.5 2284.6,743.5 2287.0,748.2 2289.3,744.1 2290.8,746.7 2292.3,749.3 2293.7,752.4 2295.2,755.2 2297.0,743.5 2298.3,746.8 2299.7,748.1 2301.1,751.7 2302.8,752.9 2304.3,748.3 2305.8,743.5 2307.2,746.4 2308.7,750.5 2310.5,744.6 2312.2,745.3 2314.0,747.0 2315.5,752.0 2316.9,755.8 2318.4,742.1 2320.4,749.7 2321.1,742.1 2323.2,751.1 2325.2,743.5 2326.6,745.9 2328.0,748.3 2329.4,744.2 2330.7,746.2 2332.1,748.4 2333.5,749.7 2334.8,748.3 2336.2,745.0 2337.6,742.8 2339.3,744.4 2341.0,745.6 2342.7,746.6 2344.4,747.6 2345.8,738.7 2347.2,742.9 2348.5,746.9 2349.9,742.1 2351.3,743.6 2352.7,744.2 2354.7,748.3 2356.8,749.7 2358.1,744.2 2359.5,744.8 2360.9,745.6 2362.3,730.5 2363.6,724.0 2365.0,717.5 2366.6,749.7" fill="none" stroke="#638ff2" stroke-width="3.2" stroke-linejoin="round" stroke-linecap="round"/>
<rect x="821.5" y="925.6" width="1959" height="23.2" fill="#dfe6f5"/>
<polyline points="814.7,933.1 816.7,932.9 818.7,933.9 820.7,933.5 822.7,933.1 824.7,932.6 826.7,932.4 828.7,932.3 830.7,932.3 832.7,934.3 834.7,934.2 836.7,934.2 838.7,932.4 840.7,932.4 842.7,932.5 844.7,933.2 846.7,933.7 848.7,934.3 850.7,934.3 852.7,935.4 854.7,935.3 856.7,934.0 858.7,934.5 860.7,937.1 862.7,936.2 864.7,936.2 866.7,935.7 868.7,936.9 870.7,936.9 872.7,935.9 874.7,936.5 876.7,936.9 878.7,936.8 880.7,937.0 882.7,935.5 884.7,934.0 886.7,933.0 888.7,929.4 890.7,927.2 892.7,932.6 894.7,937.0 896.7,936.3 898.7,936.4 900.7,937.0 902.7,936.0 904.7,936.7 906.7,935.4 908.7,935.5 910.7,935.6 912.7,935.8 914.7,935.8 916.7,934.3 918.7,933.9 920.7,934.3 922.7,933.4 924.7,934.3 926.7,934.1 928.7,933.9 930.7,932.9 932.7,934.3 934.7,934.3 936.7,933.6 938.7,933.4 940.7,932.8 942.7,932.8 944.7,931.6 946.7,932.5 948.7,931.2 950.7,933.3 952.7,932.3 954.7,931.6 956.7,931.6 958.7,931.3 960.7,932.5 962.7,934.8 964.7,934.8 966.7,936.3 968.7,937.2 970.7,933.1 972.7,933.5 974.7,933.1 976.7,932.3 978.7,932.9 980.7,933.4 982.7,933.9 984.7,934.4 986.7,935.2 988.7,934.7 990.7,931.5 992.7,928.6 994.7,936.3 996.7,928.7 998.7,937.1 1000.7,936.8 1002.7,934.1 1004.7,931.8 1006.7,931.9 1008.7,926.9 1010.7,926.9 1012.7,926.4 1014.7,926.6 1016.7,926.7 1018.7,937.0 1020.7,925.7 1022.7,928.8 1024.7,934.4 1026.7,935.8 1028.7,934.6 1030.7,935.4 1032.7,935.1 1034.7,935.5 1036.7,935.5 1038.7,934.7 1040.7,934.7 1042.7,936.2 1044.7,935.8 1046.7,935.4 1048.7,936.0 1050.7,935.8 1052.7,935.6 1054.7,936.5 1056.7,937.0 1058.7,934.6 1060.7,934.6 1062.7,935.4 1064.7,934.5 1066.7,934.5 1068.7,934.8 1070.7,934.8 1072.7,934.3 1074.7,934.7 1076.7,934.9 1078.7,934.5 1080.7,933.8 1082.7,933.5 1084.7,933.6 1086.7,934.6 1088.7,933.5 1090.7,934.0 1092.7,933.5 1094.7,933.1 1096.7,933.1 1098.7,934.6 1100.7,934.4 1102.7,934.5 1104.7,934.0 1106.7,934.6 1108.7,935.1 1110.7,935.1 1112.7,934.2 1114.7,934.6 1116.7,935.3 1118.7,935.3 1120.7,933.9 1122.7,934.5 1124.7,935.1 1126.7,933.9 1128.7,934.4 1130.7,935.2 1132.7,934.7 1134.7,934.7 1136.7,935.6 1138.7,935.0 1140.7,934.6 1142.7,935.6 1144.7,936.5 1146.7,935.7 1148.7,936.1 1150.7,936.8 1152.7,935.6 1154.7,935.4 1156.7,936.4 1158.7,936.9 1160.7,937.4 1162.7,937.1 1164.7,936.8 1166.7,936.8 1168.7,936.6 1170.7,936.5 1172.7,935.9 1174.7,935.9 1176.7,936.4 1178.7,936.4 1180.7,935.2 1182.7,935.1 1184.7,935.1 1186.7,934.3 1188.7,934.3 1190.7,934.7 1192.7,935.0 1194.7,935.0 1196.7,935.1 1198.7,935.4 1200.7,935.8 1202.7,934.8 1204.7,935.8 1206.7,935.9 1208.7,935.1 1210.7,934.5 1212.7,934.2 1214.7,935.7 1216.7,935.7 1218.7,934.3 1220.7,935.0 1222.7,935.0 1224.7,935.2 1226.7,935.3 1228.7,934.5 1230.7,934.5 1232.7,935.6 1234.7,936.4 1236.7,936.4 1238.7,934.2 1240.7,934.2 1242.7,935.1 1244.7,934.6 1246.7,934.2 1248.7,934.3 1250.7,930.9 1252.7,928.4 1254.7,932.2 1256.7,934.2 1258.7,933.3 1260.7,934.6 1262.7,933.9 1264.7,934.0 1266.7,934.0 1268.7,934.7 1270.7,934.7 1272.7,933.4 1274.7,934.2 1276.7,934.7 1278.7,933.8 1280.7,933.8 1282.7,933.9 1284.7,934.1 1286.7,934.4 1288.7,934.6 1290.7,935.4 1292.7,935.8 1294.7,935.8 1296.7,935.8 1298.7,935.8 1300.7,935.4 1302.7,935.1 1304.7,934.7 1306.7,934.3 1308.7,934.5 1310.7,935.7 1312.7,935.6 1314.7,935.6 1316.7,935.9 1318.7,934.3 1320.7,934.3 1322.7,935.0 1324.7,935.3 1326.7,934.6 1328.7,933.7 1330.7,935.0 1332.7,936.3 1334.7,936.4 1336.7,936.5 1338.7,934.5 1340.7,934.5 1342.7,935.0 1344.7,931.9 1346.7,933.1 1348.7,935.6 1350.7,935.6 1352.7,933.1 1354.7,935.0 1356.7,933.6 1358.7,934.7 1360.7,935.3 1362.7,935.3 1364.7,934.8 1366.7,935.7 1368.7,935.7 1370.7,936.2 1372.7,936.2 1374.7,935.8 1376.7,932.9 1378.7,931.4 1380.7,933.1 1382.7,933.0 1384.7,933.4 1386.7,929.4 1388.7,929.1 1390.7,929.1 1392.7,937.4 1394.7,926.4 1396.7,930.2 1398.7,935.6 1400.7,932.2 1402.7,932.5 1404.7,931.5 1406.7,932.1 1408.7,930.5 1410.7,928.5 1412.7,927.3 1414.7,930.2 1416.7,929.0 1418.7,926.9 1420.7,929.5 1422.7,931.1 1424.7,927.8 1426.7,932.4 1428.7,933.4 1430.7,930.3 1432.7,931.1 1434.7,929.0 1436.7,926.7 1438.7,929.3 1440.7,930.5 1442.7,930.9 1444.7,933.3 1446.7,934.2 1448.7,934.8 1450.7,930.5 1452.7,926.3 1454.7,926.0 1456.7,926.9 1458.7,928.0 1460.7,926.7 1462.7,930.4 1464.7,933.7 1466.7,929.7 1468.7,929.9 1470.7,928.7 1472.7,926.9 1474.7,926.0 1476.7,926.7 1478.7,926.7 1480.7,927.9 1482.7,927.9 1484.7,927.8 1486.7,927.8 1488.7,928.6 1490.7,929.1 1492.7,930.9 1494.7,929.7 1496.7,932.2 1498.7,927.3 1500.7,929.4 1502.7,930.5 1504.7,929.8 1506.7,929.1 1508.7,929.8 1510.7,930.6 1512.7,929.7 1514.7,931.5 1516.7,930.1 1518.7,928.6 1520.7,933.9 1522.7,926.6 1524.7,926.6 1526.7,931.2 1528.7,931.4 1530.7,932.2 1532.7,930.5 1534.7,929.9 1536.7,929.9 1538.7,930.5 1540.7,929.4 1542.7,928.8 1544.7,928.2 1546.7,926.9 1548.7,926.1 1550.7,927.1 1552.7,927.8 1554.7,927.8 1556.7,926.4 1558.7,933.0 1560.7,925.5 1562.7,931.5 1564.7,937.4 1566.7,935.7 1568.7,936.1 1570.7,935.7 1572.7,936.3 1574.7,935.3 1576.7,935.3 1578.7,934.8 1580.7,934.3 1582.7,935.4 1584.7,935.3 1586.7,934.5 1588.7,933.9 1590.7,934.2 1592.7,934.7 1594.7,934.8 1596.7,934.9 1598.7,935.4 1600.7,934.4 1602.7,935.3 1604.7,935.3 1606.7,934.6 1608.7,934.8 1610.7,933.9 1612.7,933.7 1614.7,934.3 1616.7,934.0 1618.7,932.6 1620.7,931.2 1622.7,933.1 1624.7,935.7 1626.7,935.3 1628.7,935.0 1630.7,935.8 1632.7,935.0 1634.7,934.9 1636.7,934.8 1638.7,935.8 1640.7,935.2 1642.7,935.3 1644.7,935.2 1646.7,934.5 1648.7,936.0 1650.7,935.6 1652.7,935.1 1654.7,936.3 1656.7,934.3 1658.7,935.7 1660.7,935.5 1662.7,935.8 1664.7,935.4 1666.7,936.3 1668.7,936.1 1670.7,935.7 1672.7,934.4 1674.7,932.7 1676.7,936.7 1678.7,935.0 1680.7,933.3 1682.7,934.1 1684.7,932.8 1686.7,937.0 1688.7,935.9 1690.7,936.4 1692.7,937.0 1694.7,937.6 1696.7,936.0 1698.7,936.8 1700.7,936.8 1702.7,934.9 1704.7,936.7 1706.7,936.7 1708.7,935.1 1710.7,935.1 1712.7,936.7 1714.7,937.4 1716.7,934.9 1718.7,934.0 1720.7,929.0 1722.7,932.0 1724.7,933.7 1726.7,932.2 1728.7,933.5 1730.7,929.4 1732.7,933.1 1734.7,928.6 1736.7,930.6 1738.7,929.5 1740.7,929.9 1742.7,929.4 1744.7,928.6 1746.7,928.1 1748.7,932.6 1750.7,930.5 1752.7,929.7 1754.7,930.4 1756.7,932.8 1758.7,933.9 1760.7,933.9 1762.7,934.3 1764.7,932.6 1766.7,934.1 1768.7,931.9 1770.7,927.7 1772.7,933.7 1774.7,933.7 1776.7,932.4 1778.7,934.3 1780.7,934.3 1782.7,933.9 1784.7,934.0 1786.7,934.6 1788.7,933.9 1790.7,932.9 1792.7,935.0 1794.7,933.9 1796.7,935.1 1798.7,934.4 1800.7,934.5 1802.7,934.7 1804.7,934.3 1806.7,933.4 1808.7,934.5 1810.7,934.5 1812.7,934.3 1814.7,935.1 1816.7,935.1 1818.7,935.0 1820.7,934.2 1822.7,934.0 1824.7,934.6 1826.7,934.8 1828.7,935.0 1830.7,933.9 1832.7,934.8 1834.7,933.5 1836.7,933.5 1838.7,933.3 1840.7,933.7 1842.7,934.3 1844.7,934.1 1846.7,934.0 1848.7,933.5 1850.7,933.0 1852.7,933.9 1854.7,933.9 1856.7,932.8 1858.7,932.2 1860.7,932.2 1862.7,933.5 1864.7,932.0 1866.7,933.1 1868.7,932.8 1870.7,931.6 1872.7,932.7 1874.7,931.8 1876.7,931.9 1878.7,932.2 1880.7,932.1 1882.7,933.3 1884.7,933.4 1886.7,933.4 1888.7,933.9 1890.7,932.2 1892.7,933.9 1894.7,932.6 1896.7,930.3 1898.7,927.8 1900.7,930.2 1902.7,932.3 1904.7,933.1 1906.7,933.7 1908.7,931.9 1910.7,931.9 1912.7,932.8 1914.7,932.0 1916.7,932.0 1918.7,932.5 1920.7,933.1 1922.7,933.6 1924.7,932.3 1926.7,931.5 1928.7,930.7 1930.7,931.3 1932.7,932.5 1934.7,930.8 1936.7,932.5 1938.7,933.3 1940.7,930.3 1942.7,927.5 1944.7,929.1 1946.7,932.5 1948.7,931.1 1950.7,931.0 1952.7,932.2 1954.7,932.8 1956.7,929.9 1958.7,931.5 1960.7,931.2 1962.7,932.2 1964.7,931.1 1966.7,930.8 1968.7,928.6 1970.7,931.6 1972.7,932.0 1974.7,927.7 1976.7,930.3 1978.7,934.4 1980.7,932.6 1982.7,928.6 1984.7,929.5 1986.7,931.3 1988.7,932.2 1990.7,932.2 1992.7,932.8 1994.7,932.3 1996.7,928.1 1998.7,931.2 2000.7,931.5 2002.7,931.7 2004.7,930.3 2006.7,931.4 2008.7,933.7 2010.7,932.4 2012.7,931.1 2014.7,933.1 2016.7,932.2 2018.7,932.3 2020.7,933.1 2022.7,932.6 2024.7,932.9 2026.7,932.2 2028.7,932.2 2030.7,932.7 2032.7,932.7 2034.7,931.2 2036.7,930.5 2038.7,929.4 2040.7,931.9 2042.7,932.8 2044.7,934.2 2046.7,933.4 2048.7,933.1 2050.7,933.1 2052.7,934.1 2054.7,933.7 2056.7,933.2 2058.7,934.1 2060.7,933.7 2062.7,933.3 2064.7,932.9 2066.7,933.3 2068.7,933.7 2070.7,932.5 2072.7,933.5 2074.7,932.9 2076.7,932.3 2078.7,931.9 2080.7,933.7 2082.7,933.8 2084.7,933.8 2086.7,933.2 2088.7,933.7 2090.7,933.3 2092.7,932.9 2094.7,934.3 2096.7,933.7 2098.7,934.3 2100.7,933.1 2102.7,933.2 2104.7,933.2 2106.7,934.2 2108.7,932.6 2110.7,934.3 2112.7,933.6 2114.7,934.1 2116.7,934.1 2118.7,934.3 2120.7,933.8 2122.7,933.3 2124.7,930.5 2126.7,933.8 2128.7,932.0 2130.7,932.0 2132.7,930.2 2134.7,932.8 2136.7,932.3 2138.7,934.1 2140.7,934.1 2142.7,932.9 2144.7,932.1 2146.7,932.1 2148.7,932.8 2150.7,932.8 2152.7,927.1 2154.7,928.6 2156.7,928.5 2158.7,929.0 2160.7,936.3 2162.7,934.0 2164.7,932.0 2166.7,933.7 2168.7,930.3 2170.7,930.4 2172.7,930.2 2174.7,929.8 2176.7,934.3 2178.7,932.9 2180.7,934.3 2182.7,933.9 2184.7,933.3 2186.7,933.3 2188.7,934.6 2190.7,933.9 2192.7,934.3 2194.7,933.8 2196.7,934.0 2198.7,934.2 2200.7,932.8 2202.7,933.4 2204.7,933.1 2206.7,934.2 2208.7,933.4 2210.7,934.3 2212.7,935.0 2214.7,935.0 2216.7,933.9 2218.7,934.4 2220.7,935.0 2222.7,933.7 2224.7,935.0 2226.7,934.6 2228.7,934.2 2230.7,934.4 2232.7,934.6 2234.7,931.6 2236.7,928.8 2238.7,933.3 2240.7,933.8 2242.7,934.5 2244.7,933.4 2246.7,933.4 2248.7,935.0 2250.7,935.0 2252.7,933.1 2254.7,934.7 2256.7,934.4 2258.7,934.5 2260.7,935.0 2262.7,933.1 2264.7,933.8 2266.7,933.4 2268.7,934.2 2270.7,934.2 2272.7,929.8 2274.7,934.3 2276.7,934.3 2278.7,929.4 2280.7,932.1 2282.7,934.2 2284.7,934.2 2286.7,934.8 2288.7,934.3 2290.7,934.3 2292.7,935.0 2294.7,935.7 2296.7,934.2 2298.7,934.6 2300.7,935.3 2302.7,935.4 2304.7,934.2 2306.7,934.2 2308.7,935.1 2310.7,934.3 2312.7,934.6 2314.7,934.6 2316.7,935.8 2318.7,934.0 2320.7,934.5 2322.7,935.2 2324.7,934.2 2326.7,934.5 2328.7,934.5 2330.7,934.3 2332.7,935.0 2334.7,935.0 2336.7,934.1 2338.7,934.1 2340.7,934.5 2342.7,934.6 2344.7,934.1 2346.7,933.6 2348.7,934.3 2350.7,934.0 2352.7,934.3 2354.7,934.8 2356.7,934.6 2358.7,934.3 2360.7,934.5 2362.7,932.5 2364.7,930.8 2368.5,949.2 2781.0,949.2" fill="none" stroke="#b9bfcc" stroke-width="1.2"/>
<rect x="806.5" y="919.5" width="15" height="36" rx="3" fill="#f7f7f7" stroke="#a8a8a8" stroke-width="1.2"/>
<line x1="811.5" y1="928.5" x2="811.5" y2="946.5" stroke="#c4c4c4" stroke-width="1.2"/><line x1="816.5" y1="928.5" x2="816.5" y2="946.5" stroke="#c4c4c4" stroke-width="1.2"/>
<clipPath id="cp"><rect x="0" y="0" width="2789" height="1140"/></clipPath><g clip-path="url(#cp)">
<rect x="2781" y="919.5" width="15" height="36" rx="3" fill="#f7f7f7" stroke="#a8a8a8" stroke-width="1.2"/>
<line x1="2786" y1="928.5" x2="2786" y2="946.5" stroke="#c4c4c4" stroke-width="1.2"/></g>
<text x="825" y="944" font-size="18" letter-spacing="0.77" fill="#747884">2026–02–28 00:00</text>
<text x="2616.5" y="944" font-size="18" letter-spacing="0.77" fill="#747884">2026–02–28 23:59</text>
</svg>
</div><!--/chart-->
</body></html>
